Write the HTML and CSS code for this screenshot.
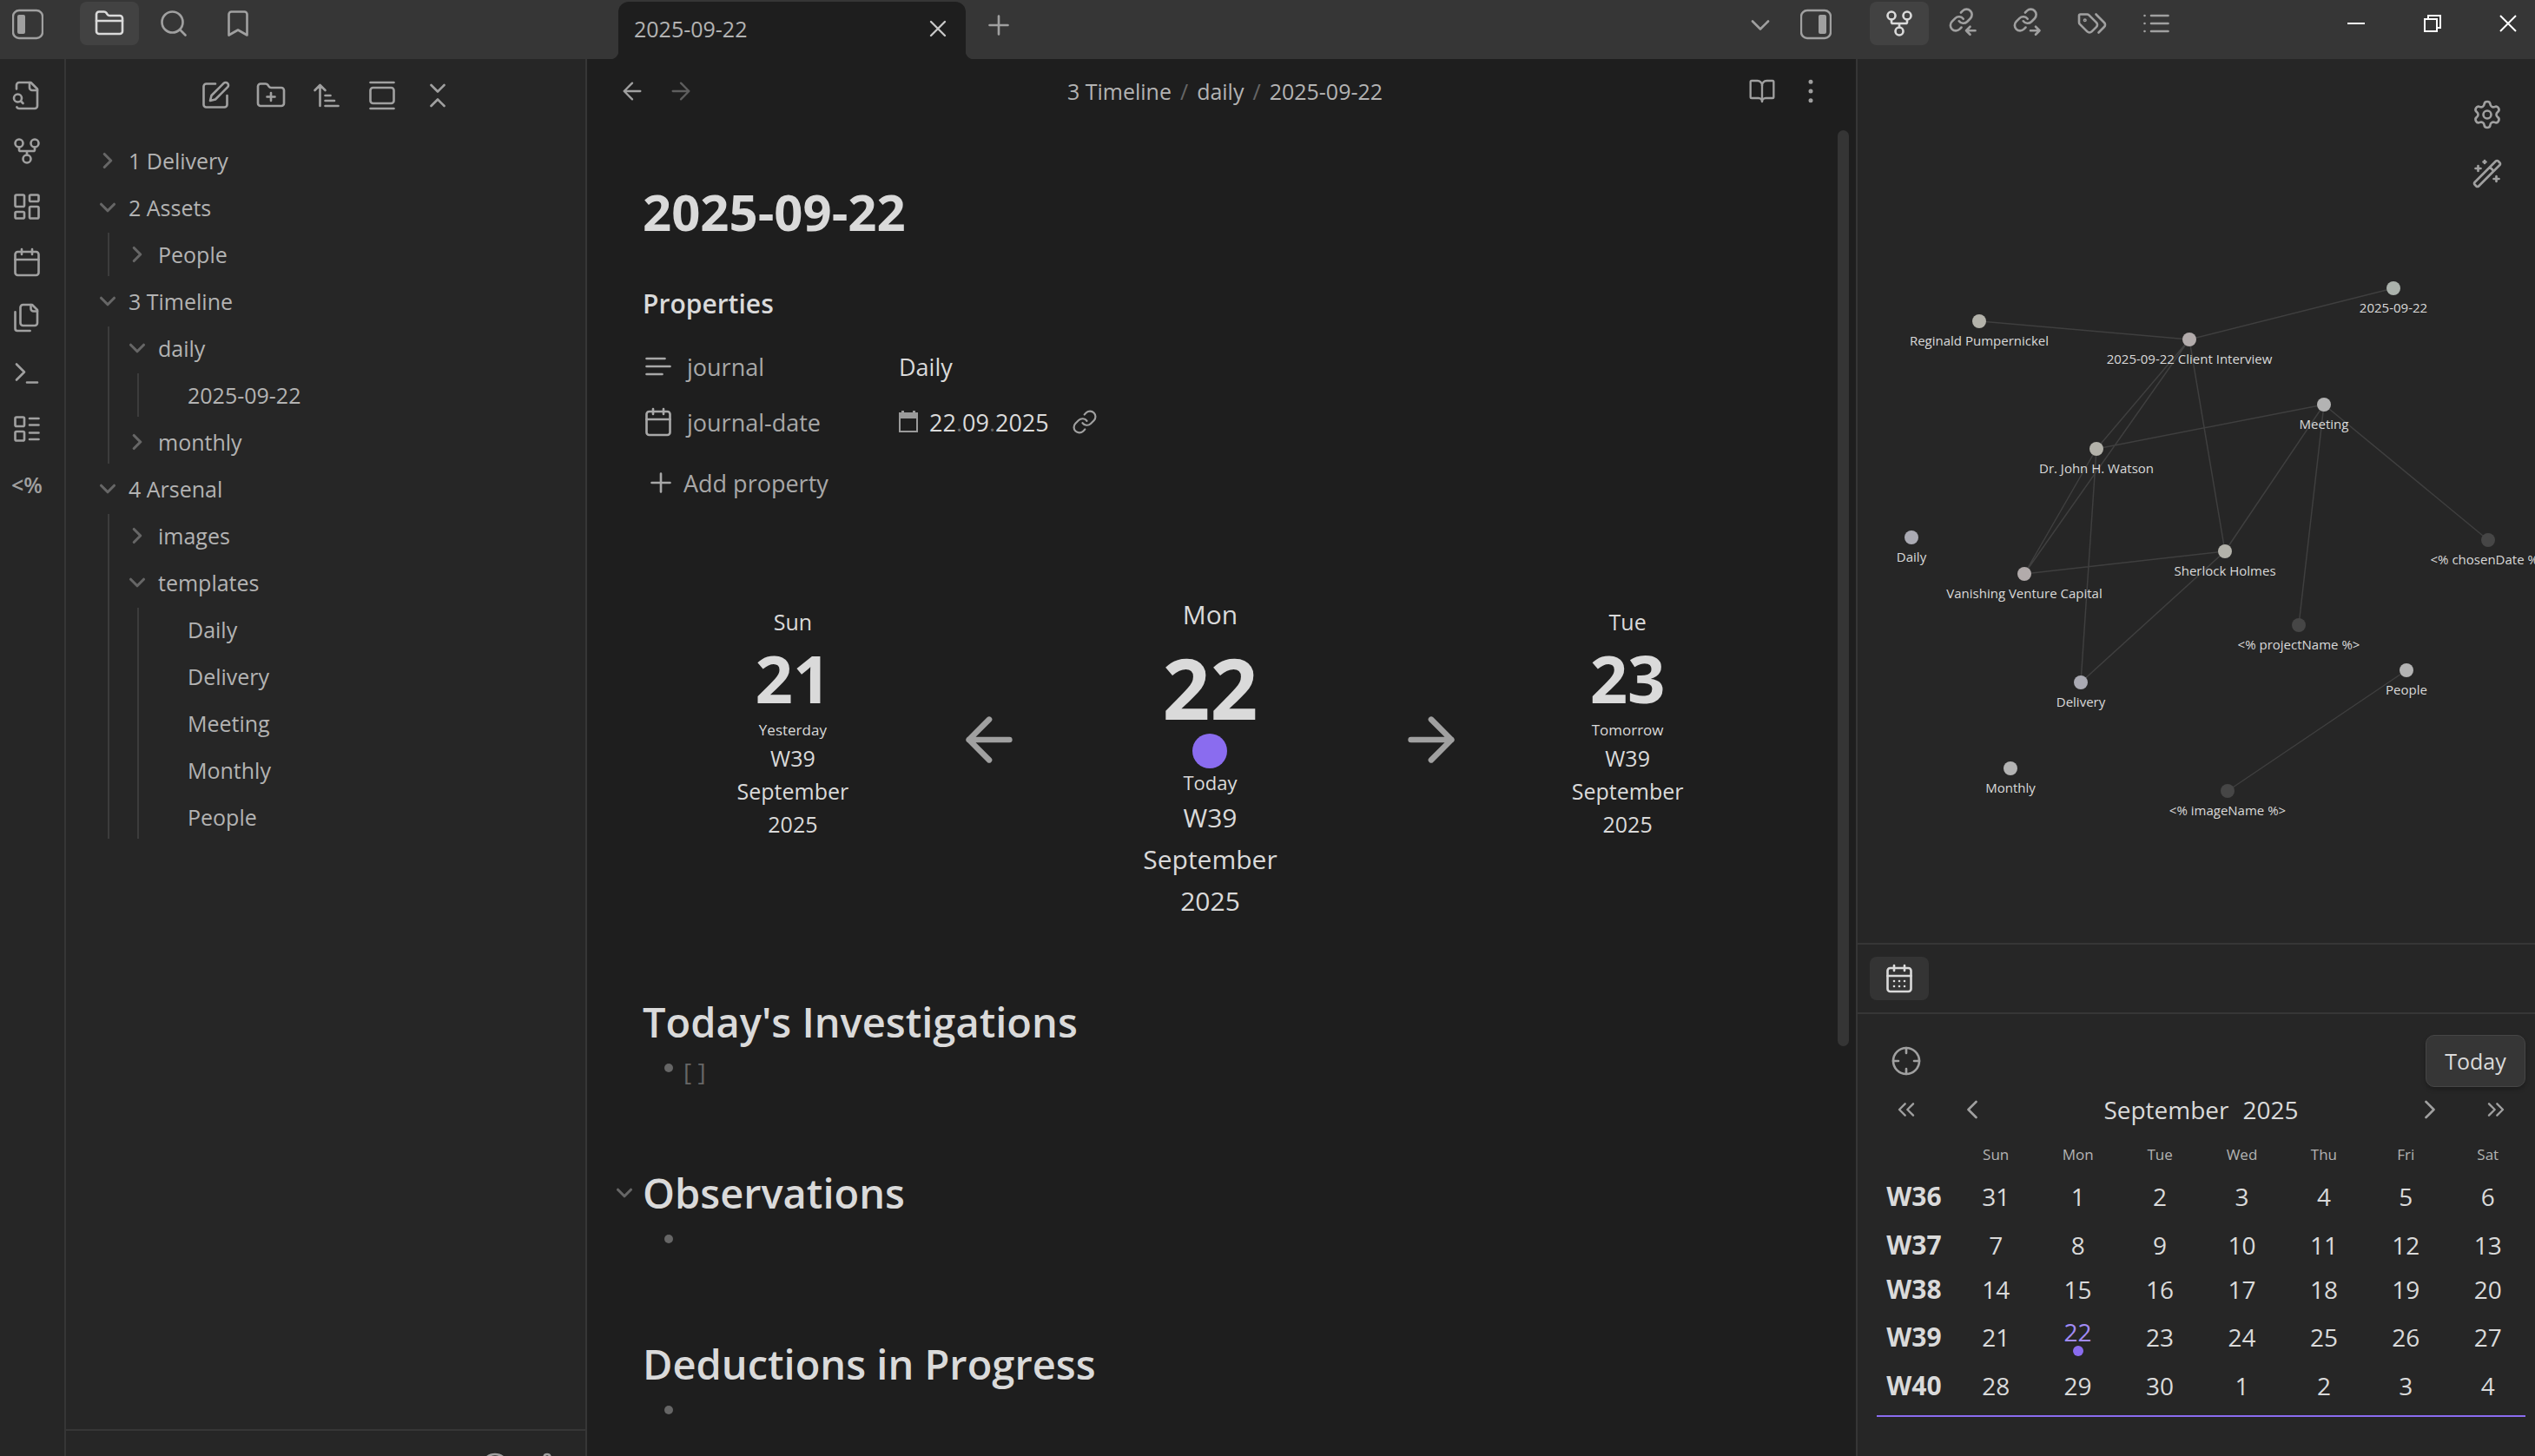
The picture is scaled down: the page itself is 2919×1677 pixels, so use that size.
FILE: index.html
```
<!DOCTYPE html>
<html lang="en">
<head>
<meta charset="utf-8">
<title>2025-09-22</title>
<link rel="stylesheet" href="styles.css">
</head>
<body>
<svg class="sprite" aria-hidden="true">
  <symbol id="folder" viewBox="0 0 24 24"><path d="M20 20a2 2 0 0 0 2-2V8a2 2 0 0 0-2-2h-7.9a2 2 0 0 1-1.69-.9L9.6 3.9A2 2 0 0 0 7.93 3H4a2 2 0 0 0-2 2v13a2 2 0 0 0 2 2Z"/><path d="M2 10h20"/></symbol>
  <symbol id="search" viewBox="0 0 24 24"><circle cx="11" cy="11" r="8"/><path d="m21 21-4.3-4.3"/></symbol>
  <symbol id="bookmark" viewBox="0 0 24 24"><path d="m19 21-7-4-7 4V5a2 2 0 0 1 2-2h10a2 2 0 0 1 2 2v16z"/></symbol>
  <symbol id="close" viewBox="0 0 24 24"><path d="M18 6 6 18M6 6l12 12"/></symbol>
  <symbol id="plus" viewBox="0 0 24 24"><path d="M5 12h14M12 5v14"/></symbol>
  <symbol id="down" viewBox="0 0 24 24"><path d="m6 9 6 6 6-6"/></symbol>
  <symbol id="right" viewBox="0 0 24 24"><path d="m9 18 6-6-6-6"/></symbol>
  <symbol id="left" viewBox="0 0 24 24"><path d="m15 18-6-6 6-6"/></symbol>
  <symbol id="first" viewBox="0 0 24 24"><path d="m11 17-5-5 5-5M18 17l-5-5 5-5"/></symbol>
  <symbol id="last" viewBox="0 0 24 24"><path d="m6 17 5-5-5-5M13 17l5-5-5-5"/></symbol>
  <symbol id="arrow-left" viewBox="0 0 24 24"><path d="m12 19-7-7 7-7M19 12H5"/></symbol>
  <symbol id="arrow-right" viewBox="0 0 24 24"><path d="M5 12h14M12 5l7 7-7 7"/></symbol>
  <symbol id="fork" viewBox="0 0 24 24"><circle cx="12" cy="18" r="3"/><circle cx="6" cy="6" r="3"/><circle cx="18" cy="6" r="3"/><path d="M18 9v2c0 .6-.4 1-1 1H7c-.6 0-1-.4-1-1V9M12 12v3"/></symbol>
  <symbol id="link" viewBox="0 0 24 24"><path d="M10 13a5 5 0 0 0 7.54.54l3-3a5 5 0 0 0-7.07-7.07l-1.72 1.71"/><path d="M14 11a5 5 0 0 0-7.54-.54l-3 3a5 5 0 0 0 7.07 7.07l1.71-1.71"/></symbol>
  <symbol id="link-in" viewBox="0 0 24 24"><g transform="translate(.2 -.6) scale(.83)" stroke-width="2.1"><path d="M10 13a5 5 0 0 0 7.54.54l3-3a5 5 0 0 0-7.07-7.07l-1.72 1.71"/><path d="M14 11a5 5 0 0 0-7.54-.54l-3 3a5 5 0 0 0 7.07 7.07l1.71-1.71"/></g><path d="M21 17.5h-7M17 14.5l-3 3 3 3"/></symbol>
  <symbol id="link-out" viewBox="0 0 24 24"><g transform="translate(.2 -.6) scale(.83)" stroke-width="2.1"><path d="M10 13a5 5 0 0 0 7.54.54l3-3a5 5 0 0 0-7.07-7.07l-1.72 1.71"/><path d="M14 11a5 5 0 0 0-7.54-.54l-3 3a5 5 0 0 0 7.07 7.07l1.71-1.71"/></g><path d="M14 17.5h7M18 14.5l3 3-3 3"/></symbol>
  <symbol id="tags" viewBox="0 0 24 24"><path d="m15 5 6.3 6.3a2.4 2.4 0 0 1 0 3.4L17 19"/><path d="M9.586 5.586A2 2 0 0 0 8.172 5H3a1 1 0 0 0-1 1v5.172a2 2 0 0 0 .586 1.414L8.29 18.29a2.426 2.426 0 0 0 3.42 0l3.58-3.58a2.426 2.426 0 0 0 0-3.42z"/><circle cx="6.5" cy="9.5" r=".5"/></symbol>
  <symbol id="list" viewBox="0 0 24 24"><path d="M8 6h13M8 12h13M8 18h13M3 6h.01M3 12h.01M3 18h.01"/></symbol>
  <symbol id="file-search" viewBox="0 0 24 24"><path d="M14 2v4a2 2 0 0 0 2 2h4"/><path d="M4.268 21a2 2 0 0 0 1.727 1H18a2 2 0 0 0 2-2V7l-5-5H6a2 2 0 0 0-2 2v3"/><path d="m9 18-1.5-1.5"/><circle cx="5" cy="14" r="3"/></symbol>
  <symbol id="dashboard" viewBox="0 0 24 24"><rect x="3" y="3" width="7" height="9" rx="1"/><rect x="14" y="3" width="7" height="5" rx="1"/><rect x="14" y="12" width="7" height="9" rx="1"/><rect x="3" y="16" width="7" height="5" rx="1"/></symbol>
  <symbol id="calendar" viewBox="0 0 24 24"><path d="M8 2v4M16 2v4M3 10h18"/><rect x="3" y="4" width="18" height="18" rx="2"/></symbol>
  <symbol id="calendar-days" viewBox="0 0 24 24"><path d="M8 2v4M16 2v4M3 10h18M8 14h.01M12 14h.01M16 14h.01M8 18h.01M12 18h.01M16 18h.01"/><rect x="3" y="4" width="18" height="18" rx="2"/></symbol>
  <symbol id="files" viewBox="0 0 24 24"><path d="M20 7h-3a2 2 0 0 1-2-2V2"/><path d="M9 18a2 2 0 0 1-2-2V4a2 2 0 0 1 2-2h7l4 4v10a2 2 0 0 1-2 2Z"/><path d="M3 7.6v12.8A1.6 1.6 0 0 0 4.6 22h9.8"/></symbol>
  <symbol id="terminal" viewBox="0 0 24 24"><path d="m4 17 6-6-6-6M12 19h8"/></symbol>
  <symbol id="layout-list" viewBox="0 0 24 24"><rect x="3" y="3" width="7" height="7" rx="1"/><rect x="3" y="14" width="7" height="7" rx="1"/><path d="M14 4h7M14 9h7M14 15h7M14 20h7"/></symbol>
  <symbol id="edit" viewBox="0 0 24 24"><path d="M12 3H5a2 2 0 0 0-2 2v14a2 2 0 0 0 2 2h14a2 2 0 0 0 2-2v-7"/><path d="M18.375 2.625a2.121 2.121 0 1 1 3 3L12 15l-4 1 1-4Z"/></symbol>
  <symbol id="folder-plus" viewBox="0 0 24 24"><path d="M12 10v6M9 13h6"/><path d="M20 20a2 2 0 0 0 2-2V8a2 2 0 0 0-2-2h-7.9a2 2 0 0 1-1.69-.9L9.6 3.9A2 2 0 0 0 7.93 3H4a2 2 0 0 0-2 2v13a2 2 0 0 0 2 2Z"/></symbol>
  <symbol id="sort" viewBox="0 0 24 24"><path d="m3 8 4-4 4 4M7 4v16M11 12h4M11 16h7M11 20h10"/></symbol>
  <symbol id="gallery" viewBox="0 0 24 24"><path d="M3 2h18M3 22h18"/><rect x="3" y="6" width="18" height="12" rx="2"/></symbol>
  <symbol id="collapse" viewBox="0 0 24 24"><path d="m7 20 5-5 5 5M7 4l5 5 5-5"/></symbol>
  <symbol id="book" viewBox="0 0 24 24"><path d="M12 7v14"/><path d="M3 18a1 1 0 0 1-1-1V4a1 1 0 0 1 1-1h5a4 4 0 0 1 4 4 4 4 0 0 1 4-4h5a1 1 0 0 1 1 1v13a1 1 0 0 1-1 1h-6a3 3 0 0 0-3 3 3 3 0 0 0-3-3z"/></symbol>
  <symbol id="more" viewBox="0 0 24 24"><circle cx="12" cy="12" r="1"/><circle cx="12" cy="4" r="1"/><circle cx="12" cy="20" r="1"/></symbol>
  <symbol id="text" viewBox="0 0 24 24"><path d="M17 6H3M21 12H3M15 18H3"/></symbol>
  <symbol id="gear" viewBox="0 0 24 24"><path d="M9.671 4.136a2.34 2.34 0 0 1 4.659 0 2.34 2.34 0 0 0 3.319 1.915 2.34 2.34 0 0 1 2.33 4.033 2.34 2.34 0 0 0 0 3.831 2.34 2.34 0 0 1-2.33 4.033 2.34 2.34 0 0 0-3.319 1.915 2.34 2.34 0 0 1-4.659 0 2.34 2.34 0 0 0-3.32-1.915 2.34 2.34 0 0 1-2.33-4.033 2.34 2.34 0 0 0 0-3.831A2.34 2.34 0 0 1 6.35 6.051a2.34 2.34 0 0 0 3.319-1.915"/><circle cx="12" cy="12" r="3"/></symbol>
  <symbol id="wand" viewBox="0 0 24 24"><path d="m21.64 3.64-1.28-1.28a1.21 1.21 0 0 0-1.72 0L2.36 18.64a1.21 1.21 0 0 0 0 1.72l1.28 1.28a1.2 1.2 0 0 0 1.72 0L21.64 5.36a1.2 1.2 0 0 0 0-1.72M14 7l3 3M5 6v4M19 14v4M10 2v2M7 8H3M21 16h-4M11 3H9"/></symbol>
  <symbol id="crosshair" viewBox="0 0 24 24"><circle cx="12" cy="12" r="10"/><path d="M22 12h-4M6 12H2M12 6V2M12 22v-4"/></symbol>
  <symbol id="help" viewBox="0 0 24 24"><circle cx="12" cy="12" r="10"/><path d="M9.09 9a3 3 0 0 1 5.83 1c0 2-3 3-3 3M12 17h.01"/></symbol>
</svg>

<header class="titlebar">
  <div class="title-left">
    <button class="toggle" aria-label="Collapse left sidebar"><svg viewBox="0 0 36 36"><rect x="1" y="2" width="34" height="32" rx="7" fill="none" stroke="currentColor" stroke-width="2.4"/><rect x="6" y="7" width="9" height="22" rx="2" fill="currentColor"/></svg></button>
    <nav class="side-tabs">
      <button class="side-tab active" aria-label="Files"><svg class="icon"><use href="#folder"/></svg></button>
      <button class="side-tab" aria-label="Search"><svg class="icon"><use href="#search"/></svg></button>
      <button class="side-tab" aria-label="Bookmarks"><svg class="icon"><use href="#bookmark"/></svg></button>
    </nav>
  </div>
  <div class="title-main">
    <div class="tab"><span>2025-09-22</span><button class="tab-close" aria-label="Close tab"><svg class="icon small"><use href="#close"/></svg></button></div>
    <button class="new-tab" aria-label="New tab"><svg class="icon"><use href="#plus"/></svg></button>
    <button class="tab-list" aria-label="Tab list"><svg class="icon"><use href="#down"/></svg></button>
    <button class="toggle" aria-label="Collapse right sidebar"><svg viewBox="0 0 36 36"><rect x="1" y="2" width="34" height="32" rx="7" fill="none" stroke="currentColor" stroke-width="2.4"/><rect x="21" y="7" width="9" height="22" rx="2" fill="currentColor"/></svg></button>
  </div>
  <div class="title-right">
    <nav class="side-tabs">
      <button class="side-tab active" aria-label="Graph"><svg class="icon"><use href="#fork"/></svg></button>
      <button class="side-tab" aria-label="Backlinks"><svg class="icon"><use href="#link-in"/></svg></button>
      <button class="side-tab" aria-label="Outgoing links"><svg class="icon"><use href="#link-out"/></svg></button>
      <button class="side-tab" aria-label="Tags"><svg class="icon"><use href="#tags"/></svg></button>
      <button class="side-tab" aria-label="Outline"><svg class="icon"><use href="#list"/></svg></button>
    </nav>
    <div class="window-controls">
      <button aria-label="Minimize"><svg viewBox="0 0 20 20"><path d="M0 10h20"/></svg></button>
      <button aria-label="Restore"><svg viewBox="0 0 20 20"><path d="M1 5h14v14H1zM5 5V1h14v14h-4"/></svg></button>
      <button aria-label="Close"><svg viewBox="0 0 20 20"><path d="M1 1l18 18M19 1 1 19"/></svg></button>
    </div>
  </div>
</header>

<div class="workspace">
  <aside class="ribbon">
    <button aria-label="Quick switcher"><svg class="icon"><use href="#file-search"/></svg></button>
    <button aria-label="Graph view"><svg class="icon"><use href="#fork"/></svg></button>
    <button aria-label="Canvas"><svg class="icon"><use href="#dashboard"/></svg></button>
    <button aria-label="Daily note"><svg class="icon"><use href="#calendar"/></svg></button>
    <button aria-label="Insert template"><svg class="icon"><use href="#files"/></svg></button>
    <button aria-label="Command palette"><svg class="icon"><use href="#terminal"/></svg></button>
    <button aria-label="Base"><svg class="icon"><use href="#layout-list"/></svg></button>
    <button class="templater">&lt;%</button>
  </aside>

  <aside class="explorer">
    <div class="explorer-actions">
      <button aria-label="New note"><svg class="icon"><use href="#edit"/></svg></button>
      <button aria-label="New folder"><svg class="icon"><use href="#folder-plus"/></svg></button>
      <button aria-label="Sort order"><svg class="icon"><use href="#sort"/></svg></button>
      <button aria-label="Auto reveal"><svg class="icon"><use href="#gallery"/></svg></button>
      <button aria-label="Collapse all"><svg class="icon"><use href="#collapse"/></svg></button>
    </div>
    <ul class="tree">
      <li><button class="folder"><svg class="icon fold"><use href="#right"/></svg>1 Delivery</button></li>
      <li><button class="folder"><svg class="icon fold"><use href="#down"/></svg>2 Assets</button>
        <ul>
          <li><button class="folder"><svg class="icon fold"><use href="#right"/></svg>People</button></li>
        </ul>
      </li>
      <li><button class="folder"><svg class="icon fold"><use href="#down"/></svg>3 Timeline</button>
        <ul>
          <li><button class="folder"><svg class="icon fold"><use href="#down"/></svg>daily</button>
            <ul><li><a class="file" href="#">2025-09-22</a></li></ul>
          </li>
          <li><button class="folder"><svg class="icon fold"><use href="#right"/></svg>monthly</button></li>
        </ul>
      </li>
      <li><button class="folder"><svg class="icon fold"><use href="#down"/></svg>4 Arsenal</button>
        <ul>
          <li><button class="folder"><svg class="icon fold"><use href="#right"/></svg>images</button></li>
          <li><button class="folder"><svg class="icon fold"><use href="#down"/></svg>templates</button>
            <ul>
              <li><a class="file" href="#">Daily</a></li>
              <li><a class="file" href="#">Delivery</a></li>
              <li><a class="file" href="#">Meeting</a></li>
              <li><a class="file" href="#">Monthly</a></li>
              <li><a class="file" href="#">People</a></li>
            </ul>
          </li>
        </ul>
      </li>
    </ul>
    <footer class="vault">
      <button aria-label="Help"><svg class="icon"><use href="#help"/></svg></button>
      <button aria-label="Settings"><svg class="icon"><use href="#gear"/></svg></button>
    </footer>
  </aside>

  <main class="editor">
    <header class="view-header">
      <div class="view-nav">
        <button aria-label="Back"><svg class="icon small"><use href="#arrow-left"/></svg></button>
        <button class="dim" aria-label="Forward"><svg class="icon small"><use href="#arrow-right"/></svg></button>
      </div>
      <nav class="crumbs"><a href="#">3 Timeline</a><i>/</i><a href="#">daily</a><i>/</i><span>2025-09-22</span></nav>
      <div class="view-nav end">
        <button aria-label="Reading view"><svg class="icon small"><use href="#book"/></svg></button>
        <button aria-label="More options"><svg class="icon small"><use href="#more"/></svg></button>
      </div>
    </header>
    <article class="note">
      <h1>2025-09-22</h1>
      <section class="properties">
        <h3>Properties</h3>
        <div class="property">
          <label for="journal"><svg class="icon"><use href="#text"/></svg>journal</label>
          <input id="journal" type="text" value="Daily">
        </div>
        <div class="property">
          <label for="journal-date"><svg class="icon"><use href="#calendar"/></svg>journal-date</label>
          <button id="journal-date" class="date"><svg viewBox="0 0 22 26"><path d="M1 5h20v19H1z" fill="none" stroke="currentColor" stroke-width="2"/><path d="M0 2h3V0h3v2h10V0h3v2h3v7H0z" fill="currentColor"/></svg><time datetime="2025-09-22">22<i>.</i>09<i>.</i>2025</time></button>
          <a href="#" class="date-link" aria-label="Open daily note"><svg class="icon"><use href="#link"/></svg></a>
        </div>
        <button class="add-property"><svg class="icon"><use href="#plus"/></svg>Add property</button>
      </section>

      <section class="journal-nav">
        <a class="day" href="#"><span>Sun</span><b>21</b><small>Yesterday</small><span>W39</span><span>September</span><span>2025</span></a>
        <button aria-label="Previous day"><svg class="icon huge"><use href="#arrow-left"/></svg></button>
        <div class="day current"><span>Mon</span><b>22</b><i class="dot"></i><small>Today</small><span>W39</span><span>September</span><span>2025</span></div>
        <button aria-label="Next day"><svg class="icon huge"><use href="#arrow-right"/></svg></button>
        <a class="day" href="#"><span>Tue</span><b>23</b><small>Tomorrow</small><span>W39</span><span>September</span><span>2025</span></a>
      </section>

      <h2>Today's Investigations</h2>
      <ul class="bullets"><li>[ ]</li></ul>
      <h2><button class="heading-fold" aria-label="Fold section"><svg class="icon fold"><use href="#down"/></svg></button>Observations</h2>
      <ul class="bullets"><li></li></ul>
      <h2>Deductions in Progress</h2>
      <ul class="bullets"><li></li></ul>
    </article>
    <div class="scroll-thumb"></div>
  </main>

  <aside class="right">
    <section class="graph">
      <svg class="graph-canvas" viewBox="0 0 780 1018" preserveAspectRatio="xMinYMin meet">
        <g class="edges">
          <path d="M140 302 382 323 617 264M382 323 275 449M382 323 192 593M382 323 423 567M275 449 537 398M275 449 192 593M275 449 257 718M537 398 423 567M537 398 508 652M537 398 726 554M192 593 423 567M423 567 257 718M632 704 426 843"/>
        </g>
        <g class="nodes">
          <circle cx="140" cy="302" r="8" class="note-node"/><circle cx="382" cy="323" r="8" class="interview-node"/><circle cx="617" cy="264" r="8" class="day-node"/>
          <circle cx="537" cy="398" r="8"/><circle cx="275" cy="449" r="8" class="note-node"/><circle cx="62" cy="551" r="8" class="blue-node"/>
          <circle cx="192" cy="593" r="8" class="interview-node"/><circle cx="423" cy="567" r="8" class="note-node"/><circle cx="726" cy="554" r="8" class="missing"/>
          <circle cx="508" cy="652" r="8" class="missing"/><circle cx="632" cy="704" r="8"/><circle cx="257" cy="718" r="8" class="blue-node"/>
          <circle cx="176" cy="817" r="8"/><circle cx="426" cy="843" r="8" class="missing"/>
        </g>
        <g class="labels">
          <text x="140" y="330">Reginald Pumpernickel</text><text x="382" y="351">2025-09-22 Client Interview</text><text x="617" y="292">2025-09-22</text>
          <text x="537" y="426">Meeting</text><text x="275" y="477">Dr. John H. Watson</text><text x="62" y="579">Daily</text>
          <text x="192" y="621">Vanishing Venture Capital</text><text x="423" y="595">Sherlock Holmes</text><text x="726" y="582">&lt;% chosenDate %&gt;</text>
          <text x="508" y="680">&lt;% projectName %&gt;</text><text x="632" y="732">People</text><text x="257" y="746">Delivery</text>
          <text x="176" y="845">Monthly</text><text x="426" y="871">&lt;% imageName %&gt;</text>
        </g>
      </svg>
      <div class="graph-controls">
        <button aria-label="Graph settings"><svg class="icon"><use href="#gear"/></svg></button>
        <button aria-label="Animate"><svg class="icon"><use href="#wand"/></svg></button>
      </div>
    </section>
    <nav class="panel-tabs"><button class="side-tab active" aria-label="Calendar"><svg class="icon"><use href="#calendar-days"/></svg></button></nav>
    <section class="calendar">
      <div class="cal-row">
        <button class="cal-btn" aria-label="Reveal current"><svg class="icon"><use href="#crosshair"/></svg></button>
        <button class="today">Today</button>
      </div>
      <div class="cal-row months">
        <button class="cal-btn" aria-label="Previous year"><svg class="icon small"><use href="#first"/></svg></button>
        <button class="cal-btn" aria-label="Previous month"><svg class="icon"><use href="#left"/></svg></button>
        <div class="month"><span>September</span><span>2025</span></div>
        <button class="cal-btn" aria-label="Next month"><svg class="icon"><use href="#right"/></svg></button>
        <button class="cal-btn" aria-label="Next year"><svg class="icon small"><use href="#last"/></svg></button>
      </div>
      <table>
        <thead><tr><td></td><th>Sun</th><th>Mon</th><th>Tue</th><th>Wed</th><th>Thu</th><th>Fri</th><th>Sat</th></tr></thead>
        <tbody>
          <tr class="tall"><th>W36</th><td>31</td><td>1</td><td>2</td><td>3</td><td>4</td><td>5</td><td>6</td></tr>
          <tr><th>W37</th><td>7</td><td>8</td><td>9</td><td>10</td><td>11</td><td>12</td><td>13</td></tr>
          <tr><th>W38</th><td>14</td><td>15</td><td>16</td><td>17</td><td>18</td><td>19</td><td>20</td></tr>
          <tr class="tall"><th>W39</th><td>21</td><td class="selected">22<i></i></td><td>23</td><td>24</td><td>25</td><td>26</td><td>27</td></tr>
          <tr><th>W40</th><td>28</td><td>29</td><td>30</td><td>1</td><td>2</td><td>3</td><td>4</td></tr>
        </tbody>
      </table>
      <hr>
    </section>
  </aside>
</div>
</body>
</html>
```
FILE: styles.css
```
:root {
  --bar: #363636;
  --line: #363636;
  --panel: #262626;
  --page: #1e1e1e;
  --text: #dadada;
  --muted: #b3b3b3;
  --faint: #666666;
  --icon: #a0a0a0;
  --accent: #8a6cef;
}

* { box-sizing: border-box; }

body {
  margin: 0;
  height: 100vh;
  overflow: hidden;
  display: flex;
  flex-direction: column;
  background: var(--page);
  color: var(--text);
  font-family: "Open Sans", "Noto Sans", sans-serif;
  font-size: 25px;
}

button, input {
  margin: 0;
  padding: 0;
  border: 0;
  background: none;
  color: inherit;
  font: inherit;
}

a { color: inherit; text-decoration: none; }
i { font-style: normal; }
ul { list-style: none; margin: 0; padding: 0; }

.sprite { position: absolute; width: 0; height: 0; }

.icon {
  display: block;
  flex: none;
  width: 36px;
  height: 36px;
  fill: none;
  stroke: currentColor;
  stroke-width: 1.75px;
  stroke-linecap: round;
  stroke-linejoin: round;
}
.icon.small { width: 32px; height: 32px; }
.icon.huge { width: 80px; height: 80px; stroke-width: 2px; }
.icon.fold { width: 30px; height: 30px; stroke-width: 2.5px; color: var(--faint); }

/* Title bar */
.titlebar {
  display: flex;
  flex: none;
  height: 68px;
  background: var(--bar);
  color: var(--icon);
}
.title-left { display: flex; width: 676px; padding: 2px 0 0 14px; gap: 42px; }
.toggle { width: 36px; height: 52px; }
.toggle svg { display: block; width: 36px; height: 36px; }
.side-tabs { display: flex; gap: 6px; }
.side-tab {
  display: flex;
  align-items: center;
  justify-content: center;
  width: 68px;
  height: 50px;
  border-radius: 8px;
}
.side-tab.active { background: #424242; color: var(--text); }

.title-main { display: flex; flex: 1; padding: 2px 28px 0 36px; }
.tab {
  position: relative;
  display: flex;
  align-items: center;
  justify-content: space-between;
  width: 400px;
  padding: 0 16px 4px 18px;
  border-radius: 12px 12px 0 0;
  background: var(--page);
  color: var(--muted);
}
.tab::before, .tab::after {
  content: "";
  position: absolute;
  bottom: 0;
  width: 10px;
  height: 10px;
}
.tab::before { right: 100%; background: radial-gradient(circle at 0 0, var(--bar) 10px, var(--page) 11px); }
.tab::after { left: 100%; background: radial-gradient(circle at 100% 0, var(--bar) 10px, var(--page) 11px); }
.tab-close { color: #c8c8c8; }
.new-tab { height: 54px; margin-left: 20px; }
.tab-list { height: 54px; margin-left: auto; margin-right: 28px; }

.title-right { display: flex; justify-content: space-between; width: 782px; padding: 2px 0 0 16px; }
.window-controls { display: flex; height: 50px; color: #ffffff; }
.window-controls button { width: 88px; }
.window-controls button:last-child { width: 74px; padding-left: 12px; }
.window-controls svg {
  display: block;
  width: 20px;
  height: 20px;
  margin: 0 auto;
  fill: none;
  stroke: currentColor;
  stroke-width: 2px;
}

.workspace { display: flex; flex: 1; min-height: 0; }

/* Ribbon */
.ribbon {
  display: flex;
  flex-direction: column;
  align-items: center;
  gap: 28px;
  width: 76px;
  padding: 24px 12px 0 0;
  border-right: 2px solid var(--line);
  background: var(--panel);
  color: var(--icon);
}
.templater { height: 36px; line-height: 36px; font-size: 25px; font-weight: 600; }

/* File explorer */
.explorer {
  display: flex;
  flex-direction: column;
  width: 600px;
  border-right: 2px solid var(--line);
  background: var(--panel);
  color: var(--muted);
}
.explorer-actions {
  display: flex;
  justify-content: center;
  gap: 28px;
  padding: 24px 0 32px 2px;
  color: var(--icon);
}
.tree { flex: 1; min-height: 0; padding-left: 33px; }
.tree, .tree ul { display: flex; flex-direction: column; gap: 4px; }
.tree ul { margin: 4px 0 0 15px; padding-left: 17px; border-left: 2px solid #3c3c3c; }
.folder, .file { display: flex; align-items: center; gap: 9px; height: 50px; line-height: 50px; }
.file { padding-left: 39px; }
.vault {
  display: flex;
  justify-content: flex-end;
  gap: 24px;
  height: 31px;
  padding: 24px 26px 0 0;
  border-top: 2px solid var(--line);
  overflow: hidden;
  color: var(--icon);
}

/* Editor */
.editor { position: relative; flex: 1; min-width: 0; overflow: hidden; }
.view-header {
  display: grid;
  grid-template-columns: 1fr auto 1fr;
  align-items: center;
  height: 74px;
  padding: 0 36px;
  color: var(--icon);
}
.view-nav { display: flex; gap: 24px; }
.view-nav.end { justify-content: flex-end; }
.view-nav .dim { color: #5e5e5e; }
.crumbs { display: flex; gap: 10px; margin-left: 8px; color: var(--muted); }
.crumbs i { color: var(--faint); }
.scroll-thumb {
  position: absolute;
  top: 82px;
  right: 8px;
  width: 13px;
  height: 1055px;
  border-radius: 7px;
  background: #353535;
}
.note { padding: 67px 90px 0 64px; }
h1 { margin: 0 0 51px; font-size: 58px; line-height: 70px; font-weight: 700; }
h3 { margin: 0 0 20px; font-size: 30px; line-height: 40px; font-weight: 600; }
.properties { font-size: 27px; }
.property { display: flex; align-items: center; height: 64px; }
.property label { display: flex; align-items: center; gap: 15px; width: 295px; color: #a8a8a8; }
.property input { flex: 1; min-width: 0; height: 44px; }
.date { display: flex; align-items: center; gap: 13px; }
.date svg { width: 22px; height: 26px; color: #9a9a9a; }
.date i { color: var(--faint); }
.date-link { margin-left: 26px; color: var(--icon); }
.date-link .icon { width: 30px; height: 30px; }
.add-property { display: flex; align-items: center; gap: 8px; height: 64px; margin: 6px 0 0 3px; color: #a8a8a8; }

.journal-nav {
  display: grid;
  grid-template-columns: 6fr 106px 7fr 106px 6fr;
  align-items: start;
  margin-top: 96px;
}
.journal-nav button { display: flex; justify-content: center; margin-top: 128px; color: var(--icon); }
.day {
  display: flex;
  flex-direction: column;
  align-items: center;
  padding-top: 13px;
  font-size: 25px;
  line-height: 38px;
}
.day b { font-size: 76px; line-height: 92px; }
.day small { font-size: 17px; line-height: 27px; }
.day.current { padding-top: 0; font-size: 30px; line-height: 48px; }
.day.current b { font-size: 96px; line-height: 120px; margin-bottom: -7px; }
.day.current small { font-size: 22px; line-height: 33px; }
.dot { width: 40px; height: 40px; border-radius: 50%; background: var(--accent); }

h2 { position: relative; margin: 83px 0 0; font-size: 47px; line-height: 64px; font-weight: 600; }
.heading-fold { position: absolute; left: -36px; top: 17px; }
.bullets li {
  display: flex;
  align-items: center;
  gap: 12px;
  height: 50px;
  padding-left: 25px;
  font-size: 28px;
  color: var(--faint);
}
.bullets li::before { content: ""; width: 10px; height: 10px; margin-bottom: 8px; border-radius: 50%; background: var(--faint); }

/* Right sidebar */
.right {
  display: grid;
  grid-template-rows: minmax(0, 2fr) 82px minmax(0, 1fr);
  width: 782px;
  border-left: 2px solid var(--line);
  background: var(--panel);
}
.graph { position: relative; overflow: hidden; }
.graph-canvas { display: block; width: 100%; height: 100%; }
.graph-controls { position: absolute; top: 46px; right: 37px; display: flex; flex-direction: column; gap: 32px; color: var(--icon); }
.edges { fill: none; stroke: #3f3f3f; stroke-width: 1.5px; }
.nodes { fill: #b3b3b3; }
.note-node { fill: #b3b2aa; }
.interview-node { fill: #b2abab; }
.day-node { fill: #abb2ac; }
.blue-node { fill: #aaaab3; }
.missing { fill: #464646; }
.labels { fill: var(--text); font-size: 15px; text-anchor: middle; }

.panel-tabs {
  display: flex;
  align-items: center;
  padding-left: 14px;
  border-top: 2px solid var(--line);
  border-bottom: 2px solid var(--line);
}
.panel-tabs .side-tab.active { background: #343434; }

.calendar { padding: 24px 11px 0 22px; }
.cal-row { display: flex; align-items: center; gap: 8px; }
.cal-btn { display: flex; align-items: center; justify-content: center; width: 68px; height: 48px; color: var(--icon); }
.today {
  width: 115px;
  height: 60px;
  margin-left: auto;
  border: 1px solid #464646;
  border-radius: 10px;
  background: var(--bar);
  box-shadow: 0 3px 5px rgba(0, 0, 0, .25);
}
.months { margin-top: 2px; font-size: 28px; }
.month { display: flex; flex: 1; justify-content: center; gap: 16px; }

.calendar table {
  width: calc(100% + 4px);
  margin-top: 10px;
  border-collapse: collapse;
  table-layout: fixed;
  font-size: 28px;
  line-height: 32px;
  text-align: center;
}
.calendar th, .calendar td { height: 51px; padding: 0; vertical-align: middle; }
.calendar tbody th { padding-right: 4px; font-size: 30px; }
.calendar thead td { width: 90px; }
.calendar thead th, .calendar thead td { height: 36px; font-size: 17px; line-height: 20px; font-weight: 400; color: var(--muted); }
.calendar .tall th, .calendar .tall td { height: 60px; }
.selected { color: #a18bf5; }
.selected i { display: block; width: 12px; height: 12px; margin: 0 auto; border-radius: 50%; background: var(--accent); }
.calendar hr { height: 2px; margin: 9px 0 0; border: 0; background: var(--accent); }
```
